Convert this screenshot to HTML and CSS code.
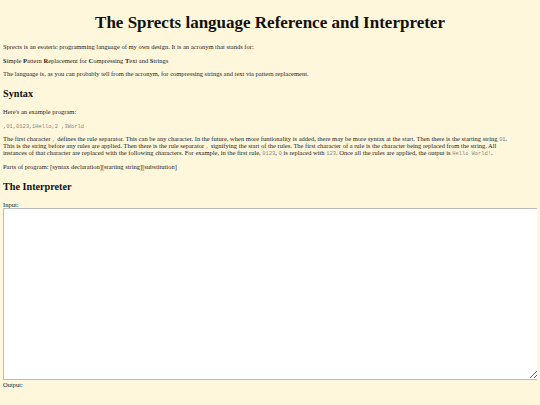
FILE: index.html
```html
<!DOCTYPE html>
<html>
<head>
<meta charset="utf-8">
<title>Sprects</title>
<link rel="stylesheet" href="styles.css">
</head>
<body class="page">
<h1 class="title">The Sprects language Reference and Interpreter</h1>
<p class="para">Sprects is an esoteric programming language of my own design. It is an acronym that stands for:</p>
<p class="para"><b>S</b>imple <b>P</b>attern <b>R</b>eplacement for <b>C</b>ompressing <b>T</b>ext and <b>S</b>trings</p>
<p class="para">The language is, as you can probably tell from the acronym, for compressing strings and text via pattern replacement.</p>
<h2 class="heading">Syntax</h2>
<p class="para">Here's an example program:</p>
<p class="para"><code class="code">,01,0123,1Hello,2 ,3World</code></p>
<p class="para">The first character <code class="code">,</code> defines the rule separator. This can be any character. In the future, when more funtionality is added, there may be more syntax at the start. Then there is the starting string <code class="code">01</code>. This is the string before any rules are applied. Then there is the rule separator <code class="code">,</code> signifying the start of the rules. The first character of a rule is the character being replaced from the string. All instances of that character are replaced with the following characters. For example, in the first rule, <code class="code">0123</code>, <code class="code">0</code> is replaced with <code class="code">123</code>. Once all the rules are applied, the output is <code class="code">Hello World!</code>.</p>
<p class="para">Parts of program: [syntax declaration][starting string][substitution]</p>
<h2 class="heading">The Interpreter</h2>
<div class="label">Input:</div>
<textarea class="input"></textarea>
<div class="label">Output:</div>
</body>
</html>
```
FILE: styles.css
```css
html { background: #fff7db; }
.page {
  margin: 3px;
  font-family: "Liberation Serif", serif;
  font-size: 6.5px;
  color: #222;
}
.title {
  font-size: 17px;
  line-height: 20px;
  text-align: center;
  margin: 10px 0 10px;
  color: #111;
}
.para {
  margin: 6.5px 0;
  line-height: 7px;
  max-width: 512px;
}
.heading {
  font-size: 10.2px;
  line-height: 12px;
  margin: 11px 0 8px;
  color: #111;
}
.code {
  font-family: "Liberation Mono", monospace;
  font-size: 5.4px;
  line-height: 0;
  color: #888;
}
.label {
  line-height: 7px;
}
.input {
  display: block;
  box-sizing: border-box;
  width: calc(100% + 2px);
  height: 172px;
  margin: 0 0 1px;
  border: 1px solid #bbb;
  background: #fff;
}
```
